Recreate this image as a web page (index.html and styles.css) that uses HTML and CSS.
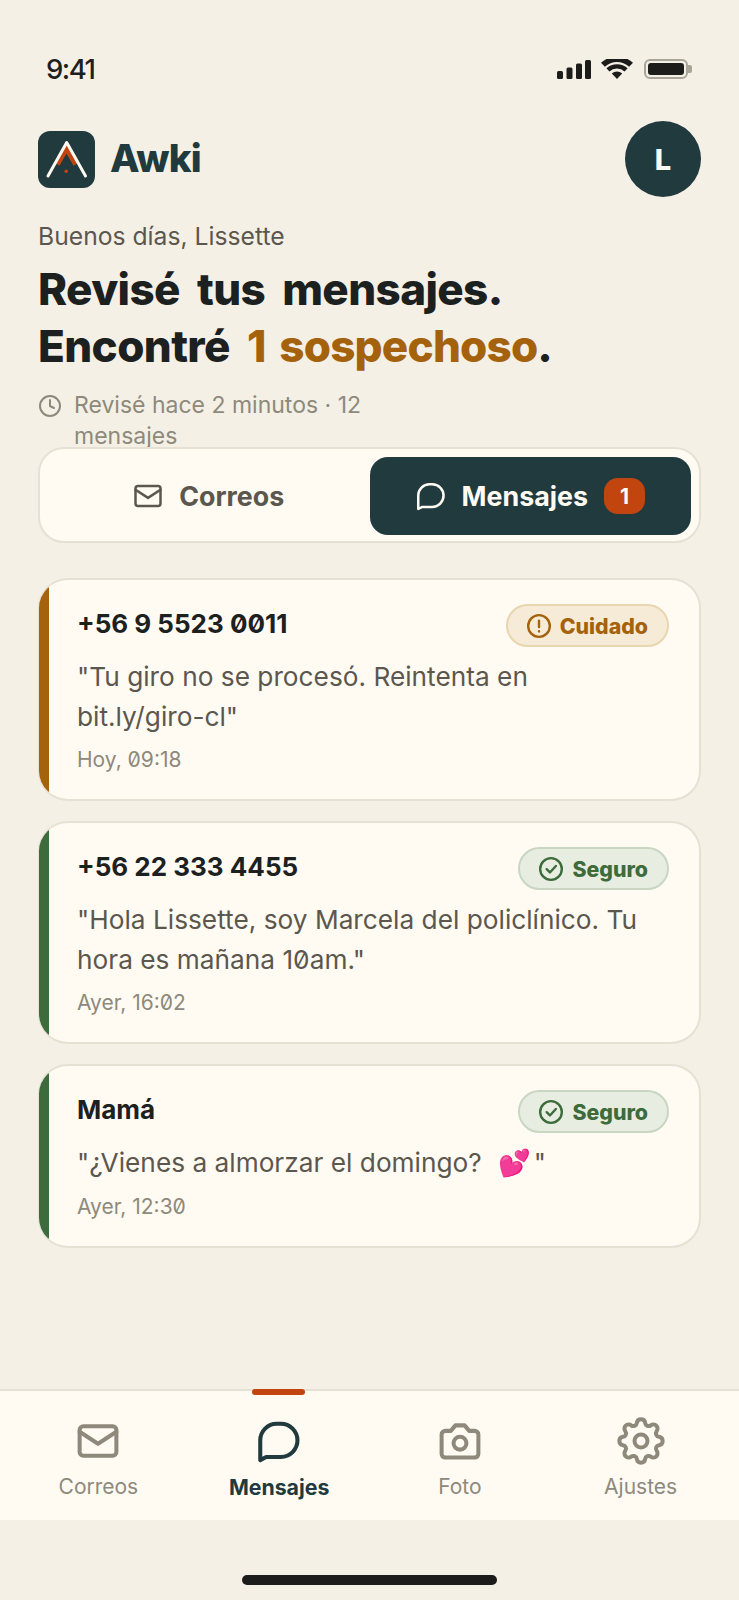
FILE: index.html
```html
<!DOCTYPE html>
<html lang="es">
<head>
<meta charset="utf-8">
<title>Awki</title>
<link rel="stylesheet" href="styles.css">
</head>
<body>
<div class="screen">
  <div class="status">
    <span class="clock">9:41</span>
    <div class="status-icons">
      <svg class="sig" viewBox="0 0 34 19"><rect x="0" y="11" width="6" height="8" rx="1.5"/><rect x="9.5" y="7.5" width="6" height="11.5" rx="1.5"/><rect x="19" y="3.5" width="6" height="15.5" rx="1.5"/><rect x="28" y="0" width="6" height="19" rx="1.5"/></svg>
      <svg class="wifi" viewBox="0 0 32 20"><path d="M16 20l-5.200-5.400a7.400 7.400 0 0 1 10.400 0z"/><path d="M8.400 12.400l-3-3.100a15.600 15.600 0 0 1 21.200 0l-3 3.100a11.200 11.200 0 0 0-15.200 0z"/><path d="M3.900 7.700L0 3.800a23.600 23.600 0 0 1 32 0l-3.900 3.900a18 18 0 0 0-24.200 0z"/></svg>
      <div class="battery"><div class="battery-body"><div class="battery-fill"></div></div><div class="battery-nub"></div></div>
    </div>
  </div>

  <header class="top">
    <div class="brand">
      <svg class="logo" viewBox="0 0 57 57"><rect width="57" height="57" rx="12" fill="#203a3e"/><path d="M19.500 33.500L28.500 18 37.500 33.500" fill="none" stroke="#c2450f" stroke-width="4.500"/><path d="M10 45L28.700 11.500 47.500 45" fill="none" stroke="#fffbf3" stroke-width="3" stroke-linecap="round" stroke-linejoin="round"/><circle cx="28.200" cy="40.300" r="1.800" fill="#c2450f"/></svg>
      <span class="brand-name">Awki</span>
    </div>
    <div class="avatar">L</div>
  </header>

  <section class="hero">
    <p class="greet">Buenos días, Lissette</p>
    <h1 class="title">Revisé tus mensajes.<br>Encontré <span class="amber">1 sospechoso</span>.</h1>
    <div class="meta">
      <svg class="meta-icon" viewBox="0 0 24 24"><circle cx="12" cy="12" r="10"/><path d="M12 6v6l4 2"/></svg>
      <span class="meta-text">Revisé hace 2 minutos · 12 mensajes</span>
    </div>
  </section>

  <div class="tabs">
    <div class="tab">
      <svg class="tab-icon" viewBox="0 0 24 24"><rect x="2" y="4" width="20" height="16" rx="2"/><path d="M22 7l-10 6.500L2 7"/></svg>
      <span>Correos</span>
    </div>
    <div class="tab tab-active">
      <svg class="tab-icon" viewBox="0 0 24 24"><path d="M1.800 22.400V11.600a9 9 0 0 1 9-9h2.200a9.050 9.050 0 0 1 0 18.100H5z"/></svg>
      <span>Mensajes</span>
      <span class="count">1</span>
    </div>
  </div>

  <main class="list">
    <article class="card card-warn">
      <div class="card-head">
        <span class="sender">+56 9 5523 0011</span>
        <span class="pill pill-warn"><svg class="pill-icon" viewBox="0 0 24 24"><circle cx="12" cy="12" r="10"/><path d="M12 7v6M12 16.800v.2"/></svg>Cuidado</span>
      </div>
      <p class="msg">"Tu giro no se procesó. Reintenta en bit.ly/giro-cl"</p>
      <p class="time">Hoy, 09:18</p>
    </article>
    <article class="card card-safe">
      <div class="card-head">
        <span class="sender">+56 22 333 4455</span>
        <span class="pill pill-safe"><svg class="pill-icon" viewBox="0 0 24 24"><circle cx="12" cy="12" r="10"/><path d="M8 12.200l3 3 5.500-6"/></svg>Seguro</span>
      </div>
      <p class="msg">"Hola Lissette, soy Marcela del policlínico. Tu hora es mañana 10am."</p>
      <p class="time">Ayer, 16:02</p>
    </article>
    <article class="card card-safe">
      <div class="card-head">
        <span class="sender">Mamá</span>
        <span class="pill pill-safe"><svg class="pill-icon" viewBox="0 0 24 24"><circle cx="12" cy="12" r="10"/><path d="M8 12.200l3 3 5.500-6"/></svg>Seguro</span>
      </div>
      <p class="msg msg-single">"¿Vienes a almorzar el domingo?<span class="emoji">💕</span>"</p>
      <p class="time">Ayer, 12:30</p>
    </article>
  </main>

  <nav class="nav">
    <span class="nav-mark"></span>
    <div class="nav-item">
      <svg class="nav-icon" viewBox="-1.600 -1.600 27.200 27.200"><rect x="2" y="4" width="20" height="16" rx="2"/><path d="M22 7l-10 6.500L2 7"/></svg>
      <span>Correos</span>
    </div>
    <div class="nav-item nav-on">
      <svg class="nav-icon" viewBox="-1.600 -1.600 27.200 27.200"><path d="M1.800 22.400V11.600a9 9 0 0 1 9-9h2.200a9.050 9.050 0 0 1 0 18.100H5z"/></svg>
      <span>Mensajes</span>
    </div>
    <div class="nav-item">
      <svg class="nav-icon" viewBox="-1.600 -1.600 27.200 27.200"><path d="M14.500 3.500h-5L7 6.500H4a2 2 0 0 0-2 2v10.500a2 2 0 0 0 2 2h16a2 2 0 0 0 2-2V8.500a2 2 0 0 0-2-2h-3z"/><circle cx="12" cy="13.200" r="3.500"/></svg>
      <span>Foto</span>
    </div>
    <div class="nav-item">
      <svg class="nav-icon" viewBox="-25 -25 50 50"><path class="gear" d="M-4.160 -18.030A4.200 4.200 0 0 1 4.160 -18.030A3.500 3.500 0 0 0 9.800 -15.690A4.200 4.200 0 0 1 15.690 -9.800A3.500 3.500 0 0 0 18.030 -4.160A4.200 4.200 0 0 1 18.030 4.160A3.500 3.500 0 0 0 15.690 9.800A4.200 4.200 0 0 1 9.800 15.690A3.500 3.500 0 0 0 4.160 18.030A4.200 4.200 0 0 1 -4.160 18.030A3.500 3.500 0 0 0 -9.800 15.690A4.200 4.200 0 0 1 -15.690 9.800A3.500 3.500 0 0 0 -18.030 4.160A4.200 4.200 0 0 1 -18.030 -4.160A3.500 3.500 0 0 0 -15.690 -9.800A4.200 4.200 0 0 1 -9.800 -15.690A3.500 3.500 0 0 0 -4.160 -18.030Z"/><circle class="gear" cx="0" cy="0" r="6.500"/></svg>
      <span>Ajustes</span>
    </div>
  </nav>
  <div class="home-zone"><div class="home-bar"></div></div>
</div>
</body>
</html>
```
FILE: styles.css
```css
* { box-sizing: border-box; }
html, body { margin: 0; padding: 0; }
body { background: #f4f0e6; font-family: Inter, "Noto Sans", sans-serif; color: #1c211f; }
p, h1 { margin: 0; }
.screen { width: 739px; height: 1600px; display: flex; flex-direction: column; overflow: hidden; }

.status { height: 121px; padding: 52px 47px 0 46px; display: flex; justify-content: space-between; align-items: flex-start; }
.clock { font-size: 27.500px; line-height: 34px; font-weight: 500; letter-spacing: -1.500px; }
.status-icons { display: flex; align-items: center; gap: 10px; height: 34px; }
.sig { width: 34px; height: 19px; fill: #1c1c1a; }
.wifi { width: 32px; height: 20px; fill: #1c1c1a; }
.battery { display: flex; align-items: center; margin-left: 1px; }
.battery-body { width: 44px; height: 20px; border: 2px solid #a9a597; border-radius: 6px; padding: 2px; }
.battery-fill { width: 100%; height: 100%; background: #1c1c1a; border-radius: 3px; }
.battery-nub { width: 4px; height: 8px; background: #a9a597; border-radius: 0 2px 2px 0; }

.top { display: flex; justify-content: space-between; align-items: center; padding: 0 38px; height: 76px; }
.brand { display: flex; align-items: center; gap: 15px; }
.logo { width: 57px; height: 57px; display: block; }
.brand-name { font-size: 38.500px; font-weight: 800; color: #203a3e; letter-spacing: -0.800px; margin-bottom: 2px; }
.avatar { width: 76px; height: 76px; border-radius: 50%; background: #203a3e; color: #fffbf3; font-size: 29px; font-weight: 800; display: flex; align-items: center; justify-content: center; }

.hero { padding: 23px 38px 0; }
.greet { font-size: 24.700px; line-height: 32px; color: #5c574e; }
.title { margin-top: 9px; font-size: 44px; line-height: 57px; font-weight: 800; letter-spacing: -0.600px; word-spacing: 8px; color: #1c211f; }
.amber { color: #a5620d; letter-spacing: -0.800px; word-spacing: 5px; }
.meta { margin-top: 15px; height: 57px; display: flex; align-items: flex-start; gap: 12px; width: 350px; }
.meta-icon { width: 24px; height: 24px; margin-top: 4px; flex: none; fill: none; stroke: #8e897b; stroke-width: 2; stroke-linecap: round; stroke-linejoin: round; }
.meta-text { font-size: 23px; line-height: 31px; color: #8e897b; }

.tabs { margin: 0 38px; height: 96px; padding: 8px 8px 6px; display: flex; background: #fffbf3; border: 2px solid #e6e1d3; border-radius: 26px; }
.tab { flex: 1; display: flex; align-items: center; justify-content: center; gap: 16px; font-size: 26.800px; font-weight: 700; color: #5c574e; border-radius: 18px; }
.tab-active { background: #203a3e; color: #fffbf3; }
.tab-icon { width: 30px; height: 30px; fill: none; stroke: currentColor; stroke-width: 2; stroke-linecap: round; stroke-linejoin: round; }
.count { min-width: 41px; height: 36px; border-radius: 14px; background: #c2450f; color: #fffbf3; font-size: 21px; font-weight: 700; display: flex; align-items: center; justify-content: center; }

.list { flex: 1; padding: 35px 38px 0; display: flex; flex-direction: column; gap: 20px; }
.card { background: #fffbf3; border: 2px solid #e6e1d3; border-left-width: 1px; border-radius: 30px; padding: 24px 30px 24px 38px; position: relative; overflow: hidden; }
.card::before { content: ""; position: absolute; left: 0; top: 0; bottom: 0; width: 10px; }
.card-warn::before { background: #a5620d; }
.card-safe::before { background: #3d6b3c; }
.card-head { display: flex; justify-content: space-between; align-items: center; }
.sender { font-size: 26px; line-height: 36px; font-weight: 700; font-feature-settings: "zero"; margin-bottom: 3px; }
.pill { height: 43px; padding: 0 19px 0 18px; border-radius: 22px; display: flex; align-items: center; gap: 8px; font-size: 21.300px; font-weight: 800; border: 2px solid; }
.pill-warn { background: #f6ebd7; border-color: #e8d6b0; color: #a5620d; }
.pill-safe { background: #e7eee1; border-color: #c8d6c2; color: #3d6b3c; }
.pill-icon { width: 26px; height: 26px; fill: none; stroke: currentColor; stroke-width: 2.200; stroke-linecap: round; stroke-linejoin: round; }
.msg { margin-top: 10px; padding-right: 20px; font-size: 26.250px; line-height: 39.500px; color: #5c574e; font-feature-settings: "zero"; }
.msg-single { height: 39.500px; }
.emoji { display: inline-block; line-height: 1; margin: 0 3px 0 16px; filter: saturate(1.6) brightness(0.95); }
.time { margin-top: 9px; font-size: 21px; line-height: 30px; color: #8e897b; font-feature-settings: "zero"; }

.nav { position: relative; height: 131px; background: #fffbf3; border-top: 2px solid #e6e1d3; padding: 0 8px; display: flex; }
.nav-mark { position: absolute; top: -2px; left: 252px; width: 53px; height: 6px; border-radius: 3px; background: #c2450f; }
.nav-item { flex: 1; display: flex; flex-direction: column; align-items: center; font-size: 21px; line-height: 26px; color: #8e897b; padding-top: 25px; gap: 8px; }
.nav-on { color: #203a3e; font-weight: 700; font-size: 21.300px; }
.nav-icon { width: 50px; height: 50px; fill: none; stroke: currentColor; stroke-width: 2.200; stroke-linecap: round; stroke-linejoin: round; }
.gear { stroke-width: 4; }

.home-zone { height: 80px; display: flex; justify-content: center; padding-top: 55px; }
.home-bar { width: 255px; height: 10px; border-radius: 5px; background: #1c1c1a; }
```
